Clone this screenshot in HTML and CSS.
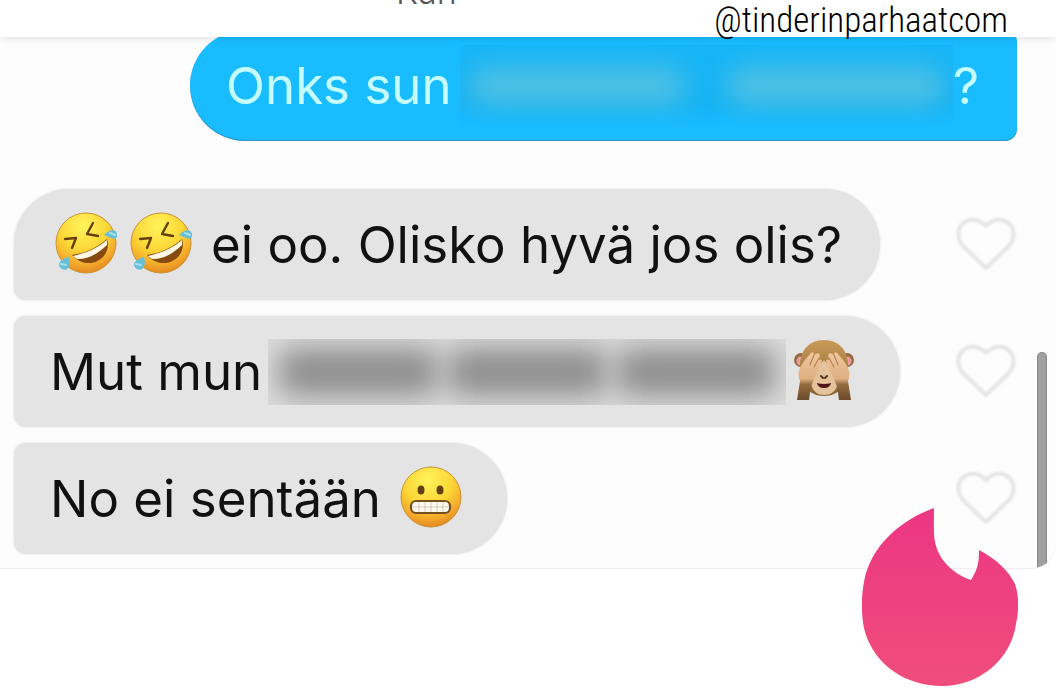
FILE: index.html
```html
<!DOCTYPE html>
<html lang="fi">
<head>
<meta charset="utf-8">
<meta name="viewport" content="width=device-width, initial-scale=1">
<title>@tinderinparhaatcom</title>
<link rel="stylesheet" href="styles.css">
</head>
<body>
<svg class="defs" aria-hidden="true">
  <defs>
    <radialGradient id="face" cx="45%" cy="22%" r="82%">
      <stop offset="0" stop-color="#fff45c"/>
      <stop offset=".5" stop-color="#fcd535"/>
      <stop offset=".8" stop-color="#f3a62a"/>
      <stop offset="1" stop-color="#dc8120"/>
    </radialGradient>
    <linearGradient id="fur" x1="0" y1="0" x2="0" y2="1">
      <stop offset="0" stop-color="#c89b58"/>
      <stop offset="1" stop-color="#8a6234"/>
    </linearGradient>
    <linearGradient id="arm" x1="0" y1="0" x2="0" y2="1">
      <stop offset="0" stop-color="#efc79c"/>
      <stop offset=".55" stop-color="#dfb081"/>
      <stop offset=".68" stop-color="#936b3e"/>
      <stop offset="1" stop-color="#694a2a"/>
    </linearGradient>
    <linearGradient id="flame" x1="0" y1="0" x2="0" y2="1">
      <stop offset="0" stop-color="#ec3683"/>
      <stop offset="1" stop-color="#f04d7c"/>
    </linearGradient>
    <symbol id="rofl" viewBox="0 0 64 64">
      <circle cx="32" cy="32" r="30" fill="url(#face)" stroke="#c99335"/>
      <path d="M11 28l11-1-4 10M39 12l-6 11 11 2" fill="none" stroke="#67400e" stroke-width="2.4" stroke-linecap="round" stroke-linejoin="round"/>
      <path d="M18 44C31 42 43 37 53 28C59 47 34 62 18 44Z" fill="#864a10"/>
      <path d="M19 45C32 42 44 37 53 29L53 34C44 43 32 49 23 48Z" fill="#fff6e4"/>
      <path d="M50 24C56 17 64 18 63 25C62 30 57 27 50 24ZM15 46C18 55 13 61 8 58C2 54 6 48 15 46Z" fill="#68bfd8"/>
      <path d="M56 22l5 2M7 53l5 1" stroke="#a5e1ec" stroke-width="2" stroke-linecap="round"/>
    </symbol>
    <symbol id="heart" viewBox="-1 1 64 58">
      <path d="M32 53L9 31C-5 13 16-5 32 11C48-5 69 13 55 31Z" fill="none" stroke="#e5e5e5" stroke-width="4" stroke-linejoin="round"/>
    </symbol>
  </defs>
</svg>
<main class="chat">
  <header class="topbar">
    <span class="match">Kun</span>
    <span class="handle">@tinderinparhaatcom</span>
  </header>
  <section class="messages">
    <p class="bubble sent"><span>Onks sun</span><span class="hidden-text hidden-blue"><i></i><i></i></span><span>?</span></p>
    <div class="row">
      <p class="bubble received first">
        <span class="pair"><svg class="emoji" role="img" aria-label="Nauraa lattialla"><use href="#rofl"/></svg><svg class="emoji" role="img" aria-label="Nauraa lattialla"><use href="#rofl"/></svg></span>
        <span>ei oo. Olisko hyvä jos olis?</span>
      </p>
      <button class="like" aria-label="Tykkää"><svg><use href="#heart"/></svg></button>
    </div>
    <div class="row">
      <p class="bubble received censored">
        <span>Mut mun</span><span class="hidden-text hidden-gray"><i></i><i></i><i></i></span>
        <svg class="emoji" viewBox="0 0 64 64" role="img" aria-label="Apina peittää silmänsä">
          <circle cx="9" cy="22" r="7" fill="#966b40"/><circle cx="55" cy="22" r="7" fill="#966b40"/>
          <circle cx="9" cy="23" r="4.5" fill="#ed9c9d"/><circle cx="55" cy="23" r="4.5" fill="#ed9c9d"/>
          <path d="M32 2C15 2 7 15 8 31C9 47 17 58 32 58C47 58 55 47 56 31C57 15 49 2 32 2Z" fill="url(#fur)"/>
          <path d="M32 22C25 30 19 35 19 46C21 54 26 57 32 57C38 57 44 54 46 46C45 35 39 30 32 22Z" fill="#e4c29c"/>
          <path d="M29 38l2 2M35 38l-2 2" stroke="#56351d" stroke-width="2" stroke-linecap="round"/>
          <path d="M25 45Q32 47 39 45Q38 50 32 50Q26 50 25 45Z" fill="#4d1715"/>
          <path d="M5 62L8 43C4 34 9 27 13 22L19 15Q22 13 22 17L26 15Q29 16 27 22Q31 20 29 26L24 38Q19 43 17 62Z" fill="url(#arm)"/>
          <path d="M59 62L56 43C60 34 55 27 51 22L45 15Q42 13 42 17L38 15Q35 16 37 22Q33 20 35 26L40 38Q45 43 47 62Z" fill="url(#arm)"/>
          <path d="M22 17l-4 10M27 20l-5 9M42 17l4 10M37 20l5 9" stroke="#b98354" stroke-width="1.2" stroke-linecap="round"/>
        </svg>
      </p>
      <button class="like" aria-label="Tykkää"><svg><use href="#heart"/></svg></button>
    </div>
    <div class="row">
      <p class="bubble received">
        <span>No ei sentään</span>
        <svg class="emoji" viewBox="0 0 64 64" role="img" aria-label="Irvistys">
          <circle cx="32" cy="32" r="30" fill="url(#face)" stroke="#c99335"/>
          <ellipse cx="22" cy="25" rx="3.5" ry="4.5" fill="#62400f"/><ellipse cx="41" cy="25" rx="3.5" ry="4.5" fill="#62400f"/>
          <rect x="12" y="36" width="39" height="12" rx="5" fill="#fffaf0" stroke="#74501e" stroke-width="2.2"/>
          <path d="M14 42H49M20 37V47M26 37V47M32 37V47M38 37V47M44 37V47" stroke="#d8c9b4"/>
        </svg>
      </p>
      <button class="like" aria-label="Tykkää"><svg><use href="#heart"/></svg></button>
    </div>
  </section>
  <div class="scroll-thumb"></div>
</main>
<svg class="flame" viewBox="0 0 156 178" aria-hidden="true">
  <path d="M72 0C38 12 8 39 2 74C-1 89-1 110 3 124C13 158 45 178 80 178C118 178 149 151 154 116C157 103 157 87 153 76C146 62 134 51 117 42C117 54 116 61 109 72C91 66 78 52 74 38C71 29 72 15 72 0Z" fill="url(#flame)"/>
</svg>
</body>
</html>
```
FILE: styles.css
```css
* { box-sizing: border-box; }

body {
  position: relative;
  min-height: 100vh;
  margin: 0;
  background: #fff;
  color: #111;
  font-family: Inter, "Liberation Sans", sans-serif;
}

.defs { position: absolute; width: 0; height: 0; }

.chat {
  position: relative;
  overflow: hidden;
  border-bottom: 1px solid #eee;
  border-bottom-right-radius: 24px;
  background: #fdfdfd;
}

.topbar {
  position: relative;
  z-index: 1;
  display: flex;
  align-items: flex-end;
  justify-content: space-between;
  height: 37px;
  padding: 0 48px 0 37.5%;
  background: #fff;
  box-shadow: 0 1px 8px rgba(0, 0, 0, .12);
}

.match {
  align-self: flex-start;
  margin-top: -28px;
  color: #555;
  font-size: 34px;
  font-weight: 300;
  line-height: 40px;
}

.handle {
  color: #000;
  font-family: "Roboto Condensed", "Liberation Sans Narrow", Roboto, sans-serif;
  font-size: 35px;
  font-weight: 300;
  line-height: 32px;
}

.messages {
  display: flex;
  flex-direction: column;
  gap: 16px;
  padding: 0 39px 14px 14px;
}

.row {
  display: flex;
  align-items: center;
  justify-content: space-between;
}

.bubble {
  display: flex;
  align-items: center;
  height: 111px;
  margin: 0;
  font-size: 51px;
  line-height: 60px;
  white-space: nowrap;
}

.sent {
  margin: -7px 0 32px 176px;
  padding: 0 38px 0 36px;
  border-radius: 56px 12px 12px 56px;
  background: #18bcff;
  box-shadow: inset 0 -1px 1px #3793c4;
  color: #c5fcff;
}

.received {
  gap: 18px;
  padding: 0 44px 0 36px;
  border-radius: 12px 56px 56px 12px;
  background: #e4e4e4;
  box-shadow: 0 0 3px #ddd;
}

.first { border-top-left-radius: 56px; padding: 0 38px 0 40px; }
.censored { gap: 6px; }

.pair { display: flex; gap: 11px; }

.emoji { flex: none; width: 64px; height: 64px; margin-bottom: 4px; }

.hidden-text {
  display: flex;
  align-items: center;
  overflow: hidden;
}

.hidden-text i { height: 36px; border-radius: 18px; filter: blur(14px); }

.hidden-blue {
  flex: 1;
  gap: 40px;
  height: 82px;
  margin-left: 8px;
  padding: 0 8px;
  background: linear-gradient(#16b6f8, #14b3f4 70%, #18bcff);
}

.hidden-blue i { flex: 1; background: #54c1e2; }

.hidden-gray {
  gap: 8px;
  width: 518px;
  height: 66px;
  padding: 0 10px;
  background: #dcdcdc;
}

.hidden-gray i { flex: 1; height: 48px; background: #8f8f8f; }

.like {
  padding: 0;
  border: 0;
  background: none;
}

.like svg { display: block; width: 64px; height: 58px; filter: blur(1px); }

.scroll-thumb {
  position: absolute;
  top: 352px;
  right: 9px;
  bottom: 0;
  width: 10px;
  border: 1px solid #888;
  border-bottom: 0;
  border-radius: 5px 5px 0 0;
  background: #a0a0a0;
}

.flame {
  position: absolute;
  right: 38px;
  bottom: 12px;
  width: 156px;
  height: 178px;
}
```
